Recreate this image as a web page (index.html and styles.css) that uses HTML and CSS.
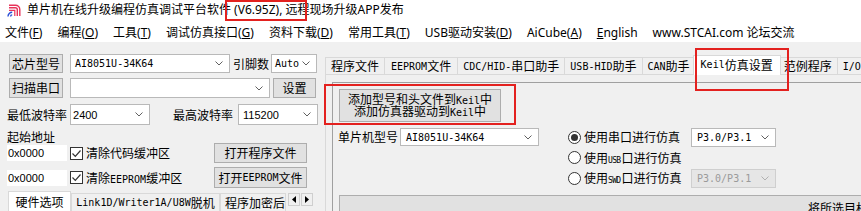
FILE: index.html
```html
<!DOCTYPE html>
<html lang="zh-CN">
<head>
<meta charset="utf-8">
<title>STC-ISP</title>
<link rel="stylesheet" href="styles.css">
</head>
<body>
<div class="titlebar">
  <svg class="logo" width="14" height="13" viewBox="0 0 14 13">
    <path d="M2 1.2 H8.5 A4.3 4.3 0 0 1 12.8 5.5 V12" fill="none" stroke="#e8335a" stroke-width="1.4"/>
    <path d="M2 3.8 H8.3 A2 2 0 0 1 10.3 5.8 V12" fill="none" stroke="#e8335a" stroke-width="1.4"/>
    <path d="M2 6.3 H7.8 V12" fill="none" stroke="#e8335a" stroke-width="1.2"/>
    <path d="M1 12.5 A4.2 4.2 0 0 1 5.2 8.3" fill="none" stroke="#2a4fd6" stroke-width="1.4"/>
    <path d="M3.6 12.5 A1.6 1.6 0 0 1 5.2 10.9" fill="none" stroke="#2a4fd6" stroke-width="1.4"/>
  </svg>
  <span class="title">单片机在线升级编程仿真调试平台软件 (V6.95Z), 远程现场升级APP发布</span>
</div>
<div class="menubar">
  <span>文件(<u>F</u>)</span>
  <span>编程(<u>O</u>)</span>
  <span>工具(<u>T</u>)</span>
  <span>调试仿真接口(<u>G</u>)</span>
  <span>资料下载(<u>D</u>)</span>
  <span>常用工具(<u>T</u>)</span>
  <span>USB驱动安装(<u>D</u>)</span>
  <span>AiCube(<u>A</u>)</span>
  <span><u>E</u>nglish</span>
  <span>www.STCAI.com 论坛交流</span>
</div>
<div class="main">
  <div class="left">
    <div class="row r1">
      <div class="btn w-chip">芯片型号</div>
      <div class="combo w-mcu"><span class="m">AI8051U-34K64</span><svg class="chev" width="8" height="5" viewBox="0 0 8 5"><path d="M0.5 0.5 L4 4 L7.5 0.5" fill="none" stroke="#606060"/></svg></div>
      <span class="lbl pins">引脚数</span>
      <div class="combo w-auto"><span class="m">Auto</span><svg class="chev" width="8" height="5" viewBox="0 0 8 5"><path d="M0.5 0.5 L4 4 L7.5 0.5" fill="none" stroke="#606060"/></svg></div>
    </div>
    <div class="row r2">
      <div class="btn w-chip">扫描串口</div>
      <div class="combo w-port"><span></span><svg class="chev" width="8" height="5" viewBox="0 0 8 5"><path d="M0.5 0.5 L4 4 L7.5 0.5" fill="none" stroke="#606060"/></svg></div>
      <div class="btn w-set">设置</div>
    </div>
    <div class="row r3">
      <span class="lbl lo">最低波特率</span>
      <div class="combo w-baud"><span class="num">2400</span><svg class="chev" width="8" height="5" viewBox="0 0 8 5"><path d="M0.5 0.5 L4 4 L7.5 0.5" fill="none" stroke="#606060"/></svg></div>
      <span class="lbl hi">最高波特率</span>
      <div class="combo w-baud2"><span class="num">115200</span><svg class="chev" width="8" height="5" viewBox="0 0 8 5"><path d="M0.5 0.5 L4 4 L7.5 0.5" fill="none" stroke="#606060"/></svg></div>
    </div>
    <div class="caption">起始地址</div>
    <div class="row r5">
      <div class="input num">0x0000</div>
      <span class="chk"><svg width="11" height="11" viewBox="0 0 11 11"><path d="M1.5 5.5 L4.3 8.3 L9.5 2.5" fill="none" stroke="#333" stroke-width="1.2"/></svg></span>
      <span class="chklbl">清除代码缓冲区</span>
      <div class="btn w-open">打开程序文件</div>
    </div>
    <div class="row r6">
      <div class="input num">0x0000</div>
      <span class="chk"><svg width="11" height="11" viewBox="0 0 11 11"><path d="M1.5 5.5 L4.3 8.3 L9.5 2.5" fill="none" stroke="#333" stroke-width="1.2"/></svg></span>
      <span class="chklbl">清除<span class="m">EEPROM</span>缓冲区</span>
      <div class="btn w-open">打开<span class="m">EEPROM</span>文件</div>
    </div>
    <div class="btabs">
      <div class="btab active w-hw">硬件选项</div>
      <div class="btab w-link"><span class="m">Link1D/Writer1A/U8W</span>脱机</div>
      <div class="btab w-enc">程序加密后传输</div>
      <div class="arrows">
        <span class="arr"><svg width="4" height="7" viewBox="0 0 4 7"><path d="M4 0 L0 3.5 L4 7 Z" fill="#000"/></svg></span>
        <span class="arr"><svg width="4" height="7" viewBox="0 0 4 7"><path d="M0 0 L4 3.5 L0 7 Z" fill="#000"/></svg></span>
      </div>
    </div>
  </div>
  <div class="right">
    <div class="tabs">
      <div class="tab">程序文件</div>
      <div class="tab wide"><span class="m">EEPROM</span>文件</div>
      <div class="tab"><span class="m">CDC/HID-</span>串口助手</div>
      <div class="tab"><span class="m">USB-HID</span>助手</div>
      <div class="tab"><span class="m">CAN</span>助手</div>
      <div class="tab active"><span class="m">Keil</span>仿真设置</div>
      <div class="tab">范例程序</div>
      <div class="tab"><span class="m">I/O</span>口配置工具</div>
    </div>
    <div class="panel">
      <div class="group">
        <div class="btn kbtn">
          <span class="kl">添加型号和头文件到<span class="m">Keil</span>中</span>
          <span class="kl">添加仿真器驱动到<span class="m">Keil</span>中</span>
        </div>
        <div class="sim">
          <div class="sim-left">
            <span class="lbl">单片机型号</span>
            <div class="combo w-sim"><span class="m">AI8051U-34K64</span><svg class="chev" width="8" height="5" viewBox="0 0 8 5"><path d="M0.5 0.5 L4 4 L7.5 0.5" fill="none" stroke="#606060"/></svg></div>
          </div>
          <div class="sim-right">
            <span class="radio on"></span>
            <span class="rlbl">使用串口进行仿真</span>
            <div class="combo w-p3"><span class="m">P3.0/P3.1</span><svg class="chev" width="8" height="5" viewBox="0 0 8 5"><path d="M0.5 0.5 L4 4 L7.5 0.5" fill="none" stroke="#606060"/></svg></div>
            <span class="radio"></span>
            <span class="rlbl">使用<span class="ms">USB</span>口进行仿真</span>
            <span></span>
            <span class="radio"></span>
            <span class="rlbl">使用<span class="ms">SWD</span>口进行仿真</span>
            <div class="combo w-p3 disabled"><span class="m">P3.0/P3.1</span><svg class="chev" width="8" height="5" viewBox="0 0 8 5"><path d="M0.5 0.5 L4 4 L7.5 0.5" fill="none" stroke="#b0b0b0"/></svg></div>
          </div>
        </div>
        <div class="btn bigbtn">将所选目标单片机设置为仿真芯片</div>
      </div>
    </div>
  </div>
</div>
<div class="mark mark-ver"></div>
<div class="mark mark-tab"></div>
<div class="mark mark-btn"></div>
</body>
</html>
```
FILE: styles.css
```css
* { box-sizing: border-box; margin: 0; padding: 0; }
html, body { width: 861px; height: 211px; overflow: hidden; }
body {
  position: relative;
  font-family: "Noto Sans", "Noto Sans CJK SC", sans-serif;
  font-size: 12px;
  color: #000;
  background: #f0f0f0;
}
u { text-decoration: underline; text-underline-offset: 1px; }
.m { font-family: "DejaVu Sans Mono", monospace; font-size: 10px; }
.ms { font-family: "DejaVu Sans Mono", monospace; font-size: 8px; letter-spacing: -0.7px; margin-right: 1px; }
.num { font-family: "Liberation Sans", sans-serif; font-size: 11px; }

.titlebar {
  height: 22px; background: #fff;
  display: flex; align-items: center;
  padding-left: 7px; gap: 6px; padding-bottom: 2px;
}
.title { white-space: nowrap; line-height: 14px; }

.menubar {
  height: 20px; background: #fff;
  display: flex; align-items: center;
  padding-left: 5px; gap: 15px;
  white-space: nowrap;
}

.main { display: flex; height: 169px; }
.left { width: 318px; flex: none; padding-top: 12px; }
.row { display: flex; align-items: center; }

.btn {
  background: #e1e1e1; border: 1px solid #adadad;
  display: flex; align-items: center; justify-content: center;
  white-space: nowrap; height: 100%;
}
.combo {
  background: #fff; border: 1px solid #b9b9b9;
  display: flex; align-items: center; justify-content: space-between;
  padding: 0 6px 0 4px; height: 100%; white-space: nowrap;
}
.combo.disabled { background: #e6e6e6; border-color: #cfcfcf; color: #9a9a9a; }
.lbl { white-space: nowrap; }

.r1 { height: 19px; }
.r2 { height: 20px; margin-top: 5px; }
.r3 { height: 21px; margin-top: 6px; }
.w-chip { margin-left: 9px; width: 54px; }
.w-mcu { margin-left: 7px; width: 160px; }
.pins { margin-left: 3px; }
.w-auto { margin-left: 2px; width: 46px; padding-left: 3px; }
.w-port { margin-left: 7px; width: 200px; }
.w-set { margin-left: 3px; width: 43px; }
.lo { margin-left: 7px; }
.w-baud { margin-left: 3px; width: 80px; padding-left: 2px; }
.hi { margin-left: 23px; }
.w-baud2 { margin-left: 5px; width: 80px; }

.caption { height: 12px; line-height: 12px; margin-top: 7px; padding-left: 7px; }
.r5 { height: 20px; margin-top: -1px; }
.r6 { height: 21px; margin-top: 4px; }
.input {
  margin-left: 7px; width: 60px; height: 16px; background: #fff;
  padding-left: 1px; line-height: 16px;
}
.chk {
  margin-left: 3px; width: 13px; height: 13px;
  border: 1px solid #333; background: #fff;
  display: flex; align-items: center; justify-content: center;
}
.chklbl { margin-left: 3px; white-space: nowrap; }
.w-open { margin-left: auto; margin-right: 11px; width: 93px; }

.btabs { display: flex; align-items: flex-end; height: 20px; margin-top: 3px; }
.btab {
  height: 18px; border: 1px solid #d9d9d9; border-bottom: none;
  display: flex; align-items: center; justify-content: center;
  white-space: nowrap; overflow: hidden; background: #f0f0f0;
}
.btab.active { height: 20px; background: #fff; }
.w-hw { margin-left: 8px; width: 63px; }
.w-link { width: 149px; }
.w-enc { width: 66px; justify-content: flex-start; padding-left: 4px; }
.arrows { display: flex; gap: 1px; margin-left: 2px; align-self: flex-start; margin-top: 2px; }
.arr {
  width: 12px; height: 13px; background: #f0f0f0; border: 1px solid #cfcfcf;
  display: flex; align-items: center; justify-content: center;
}

.right { flex: 1; min-width: 0; padding-left: 7px; padding-top: 13px; }
.tabs { display: flex; align-items: flex-end; height: 19px; position: relative; z-index: 1; }
.tab {
  height: 17px; padding: 0 5px; margin-right: -1px;
  border: 1px solid #d9d9d9; border-bottom: none; background: #f0f0f0;
  display: flex; align-items: center; white-space: nowrap; flex: none;
}
.tab.wide { padding: 0 6px; }
.tab.active {
  height: 20px; margin-bottom: -1px; background: #fff;
  padding: 0 7px; margin-left: -2px; margin-right: -3px;
  position: relative; z-index: 2; padding-bottom: 2px;
}
.panel {
  border-top: 1px solid #d9d9d9; border-left: 1px solid #d9d9d9;
  padding: 7px 0 0 6px; height: 140px;
}
.group {
  border-top: 1px solid #a0a0a0; border-left: 1px solid #a0a0a0;
  padding: 6px 0 0 6px; height: 140px;
}
.kbtn {
  width: 162px; height: 33px;
  flex-direction: column;
}
.kl { display: block; height: 12px; line-height: 12px; }
.sim { display: flex; margin-top: 5px; height: 61px; }
.sim-left { display: flex; align-items: center; height: 20px; margin-left: -1px; }
.w-sim { margin-left: 2px; width: 139px; height: 18px; padding-left: 5px; }
.sim-right {
  margin-left: 29px;
  display: grid;
  grid-template-columns: 13px 104px 85px;
  grid-template-rows: 20px 21px 20px;
  column-gap: 3px; align-items: center;
}
.w-p3 { width: 85px; height: 19px; padding-left: 5px; }
.radio {
  width: 13px; height: 13px; border: 1px solid #333; border-radius: 50%;
  background: #fff; display: flex; align-items: center; justify-content: center;
}
.radio.on::after {
  content: ""; width: 7px; height: 7px; border-radius: 50%; background: #333;
}
.rlbl { white-space: nowrap; }
.bigbtn {
  margin-top: 7px; height: 26px; width: 700px;
  justify-content: flex-start; padding-left: 468px;
}

.mark { position: absolute; border: 2px solid #e3211f; pointer-events: none; z-index: 5; }
.mark-ver { left: 225px; top: 0; width: 82px; height: 21px; }
.mark-tab { left: 695px; top: 48px; width: 94px; height: 43px; }
.mark-btn { left: 324px; top: 84px; width: 192px; height: 41px; }
```
